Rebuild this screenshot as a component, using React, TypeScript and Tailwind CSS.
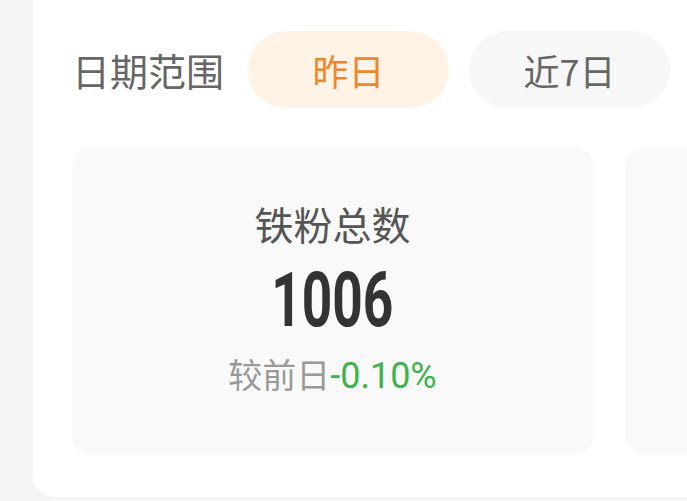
import type { ReactNode } from 'react';

const cjk = '"Noto Sans CJK SC", "Noto Sans", sans-serif';
const digits = '"Roboto", "Noto Sans CJK SC", sans-serif';

interface RangeChipProps {
  active?: boolean;
  children: ReactNode;
}

function RangeChip({ active, children }: RangeChipProps) {
  return (
    <button
      className={`flex h-[77px] w-[201px] shrink-0 items-center justify-center rounded-full text-[36px] ${
        active ? 'bg-[#fff3e6] text-[#f0862a]' : 'bg-[#f7f7f7] text-[#666666]'
      }`}
      style={{ fontFamily: cjk }}
    >
      {children}
    </button>
  );
}

interface StatCardProps {
  title: string;
  value: string;
  change: string;
}

function StatCard({ title, value, change }: StatCardProps) {
  return (
    <div className="flex h-[306px] w-[521px] shrink-0 flex-col items-center rounded-[18px] bg-[#f9f9f9] pt-[52px]">
      <div className="text-[39px] leading-[46px] text-[#555555]" style={{ fontFamily: cjk }}>
        {title}
      </div>
      {/* narrow figures for the big number */}
      <div
        className="mt-[14px] scale-x-[0.7] text-[76px] font-bold leading-[80px] text-[#333333]"
        style={{ fontFamily: digits }}
      >
        {value}
      </div>
      <div className="mt-[14px] flex items-baseline leading-[40px]">
        <span className="text-[34px] text-[#999999]" style={{ fontFamily: cjk }}>
          较前日
        </span>
        <span className="text-[36px] text-[#3cb44b]" style={{ fontFamily: digits }}>
          {change}
        </span>
      </div>
    </div>
  );
}

export default function App() {
  return (
    <div className="h-[501px] w-[687px] overflow-hidden bg-[#f5f5f5] pl-[33px]">
      <div className="h-[497px] w-[700px] rounded-bl-[22px] bg-white pl-[39px] pt-[31px]">
        {/* date range switch */}
        <div className="flex items-center">
          <span className="mr-[24px] text-[38px] text-[#666666]" style={{ fontFamily: cjk }}>
            日期范围
          </span>
          <RangeChip active>昨日</RangeChip>
          <div className="w-[20px] shrink-0" />
          <RangeChip>近7日</RangeChip>
        </div>

        {/* stat cards */}
        <div className="mt-[40px] flex gap-[33px]">
          <StatCard title="铁粉总数" value="1006" change="-0.10%" />
          <div className="h-[306px] w-[521px] shrink-0 rounded-[18px] bg-[#f9f9f9]" />
        </div>
      </div>
    </div>
  );
}
